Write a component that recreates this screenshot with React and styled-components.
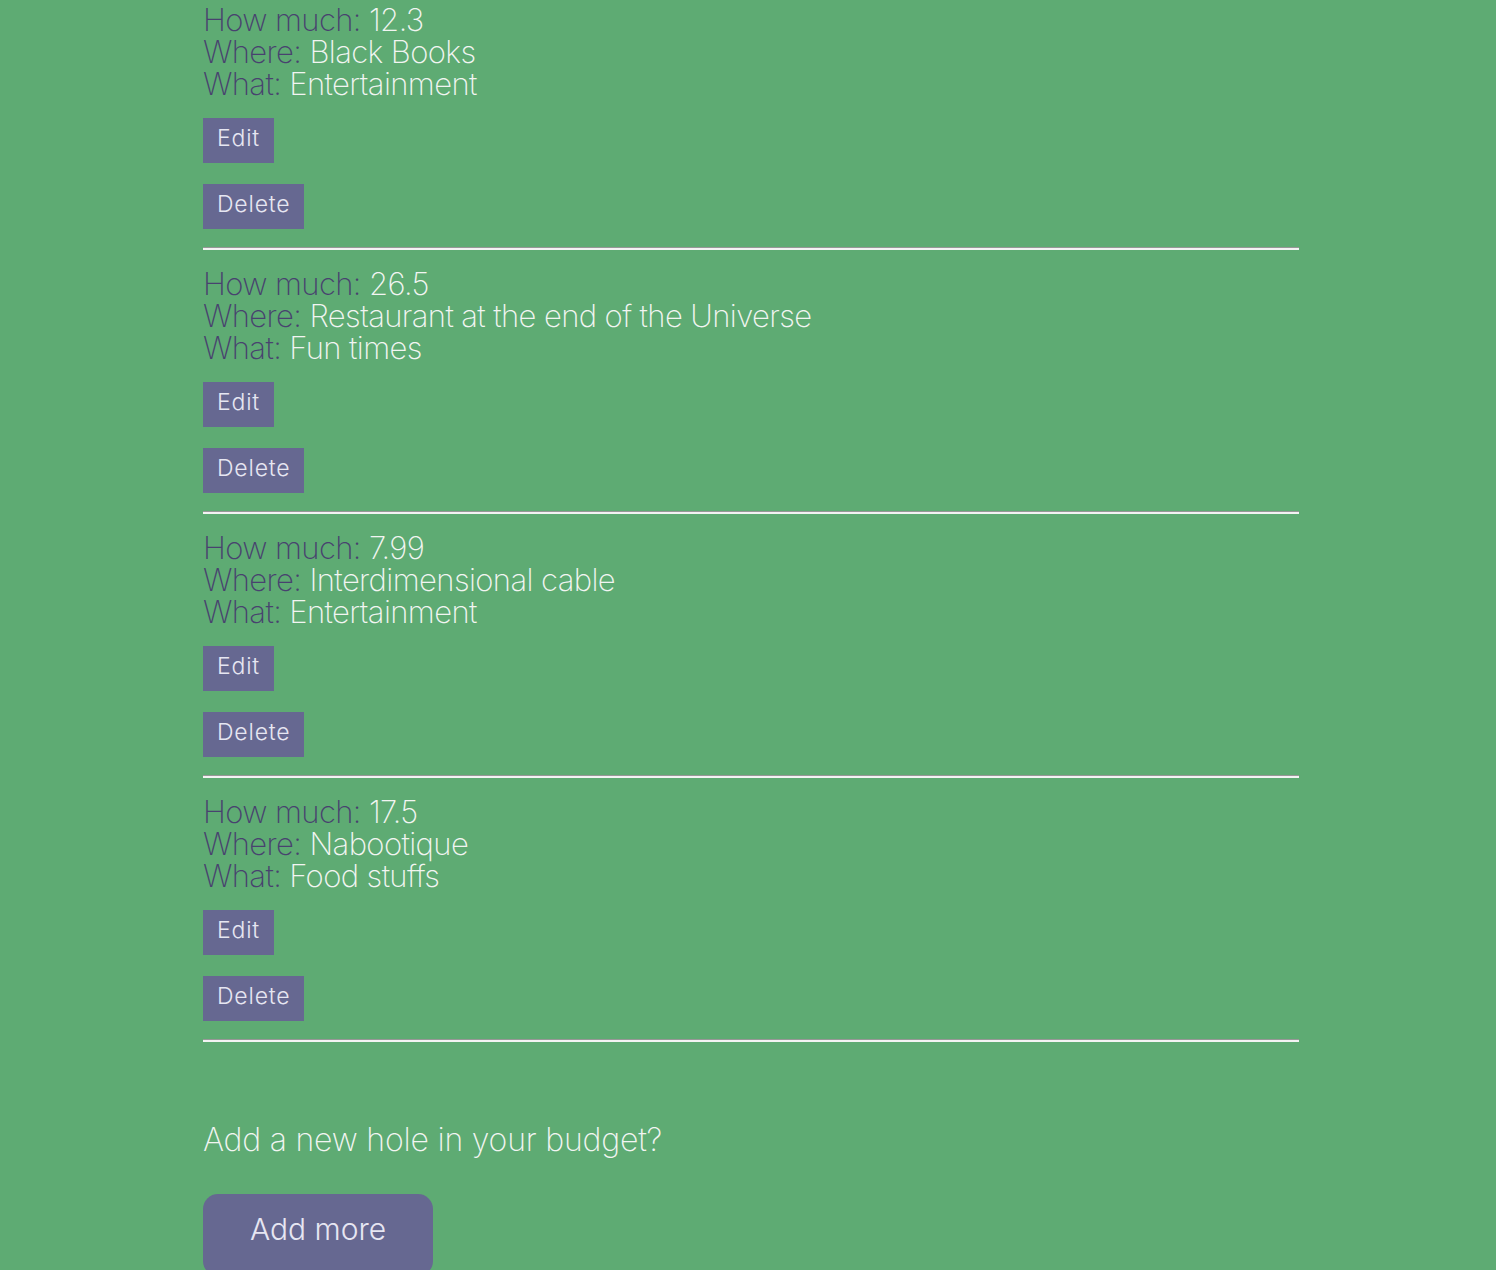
import React from "react";
import styled, { createGlobalStyle } from "styled-components";

const expenses = [
  { amount: "12.3", where: "Black Books", what: "Entertainment" },
  { amount: "26.5", where: "Restaurant at the end of the Universe", what: "Fun times" },
  { amount: "7.99", where: "Interdimensional cable", what: "Entertainment" },
  { amount: "17.5", where: "Nabootique", what: "Food stuffs" },
];

const App = () => {
  return (
    <>
      <GlobalStyle />
      <Page>
        {expenses.map((item, i) => (
          <Expense key={i}>
            <Details>
              <Line>
                <Label>How much: </Label>
                <Value>{item.amount}</Value>
              </Line>
              <Line>
                <Label>Where: </Label>
                <Value>{item.where}</Value>
              </Line>
              <Line>
                <Label>What: </Label>
                <Value>{item.what}</Value>
              </Line>
            </Details>
            <Actions>
              <SmallButton>Edit</SmallButton>
              <SmallButton>Delete</SmallButton>
            </Actions>
            <Divider />
          </Expense>
        ))}
        <Prompt>Add a new hole in your budget?</Prompt>
        <AddButton>Add more</AddButton>
      </Page>
    </>
  );
};

const GlobalStyle = createGlobalStyle`
  body {
    margin: 0;
    background-color: #5eab73;
    font-family: Inter, "Liberation Sans", sans-serif;
  }
`;

const Page = styled.div`
  width: 1096px;
  padding-left: 203px;
  display: flex;
  flex-direction: column;
  align-items: flex-start;
`;

const Expense = styled.div`
  width: 100%;
  display: flex;
  flex-direction: column;
  align-items: flex-start;
  padding-bottom: 14px;
`;

const Details = styled.div`
  padding-top: 4px;
  font-size: 31px;
  font-weight: 200;
  line-height: 32px;
  letter-spacing: -0.6px;
`;

const Line = styled.div`
  white-space: nowrap;
`;

const Label = styled.span`
  color: #48426f;
`;

const Value = styled.span`
  color: #f2f5f2;
`;

const Actions = styled.div`
  display: flex;
  flex-direction: column;
  align-items: flex-start;
  gap: 21px;
  margin-top: 18px;
`;

const SmallButton = styled.button`
  height: 45px;
  padding: 0 14px 6px;
  border: none;
  background-color: #666891;
  color: #e6e6f2;
  font-family: Inter, "Liberation Sans", sans-serif;
  font-size: 23px;
  font-weight: 300;
  letter-spacing: 0.8px;
  cursor: pointer;
`;

const Divider = styled.hr`
  width: 100%;
  margin: 18px 0 0;
  border: none;
  border-top: 1px solid #979797;
  border-bottom: 2px solid #f3f3f3;
  height: 0;
`;

const Prompt = styled.h2`
  margin: 66px 0 0;
  font-size: 32px;
  font-weight: 200;
  line-height: 36px;
  color: #f2f5f2;
  letter-spacing: -0.2px;
`;

const AddButton = styled.button`
  margin-top: 36px;
  width: 230px;
  height: 82px;
  padding-bottom: 14px;
  border: none;
  border-radius: 15px;
  background-color: #666891;
  color: #e6e6f2;
  font-family: Inter, "Liberation Sans", sans-serif;
  font-size: 30px;
  font-weight: 300;
  cursor: pointer;
`;

export default App;
